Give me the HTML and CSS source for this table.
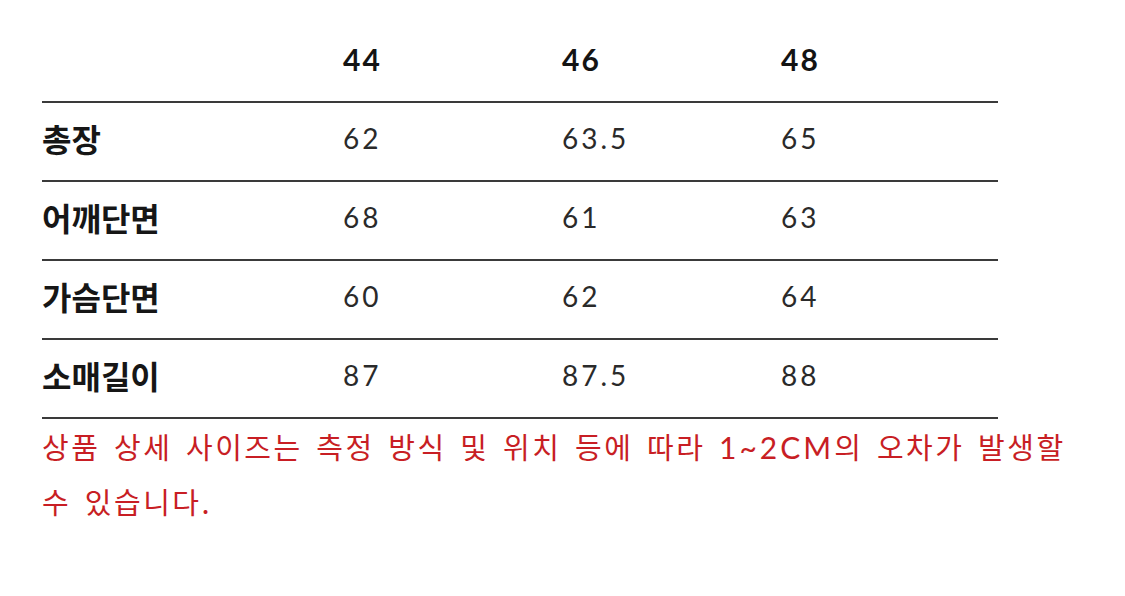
FILE: index.html
```html
<!DOCTYPE html>
<html lang="ko">
<head>
<meta charset="utf-8">
<title>사이즈 표</title>
<link rel="stylesheet" href="styles.css">
</head>
<body>
<div class="sheet">
  <div class="size-table">
    <div class="row head">
      <div class="cell label"></div>
      <div class="cell size">44</div>
      <div class="cell size">46</div>
      <div class="cell size">48</div>
    </div>
    <div class="row">
      <div class="cell label">총장</div>
      <div class="cell num">62</div>
      <div class="cell num">63.5</div>
      <div class="cell num">65</div>
    </div>
    <div class="row">
      <div class="cell label">어깨단면</div>
      <div class="cell num">68</div>
      <div class="cell num">61</div>
      <div class="cell num">63</div>
    </div>
    <div class="row">
      <div class="cell label">가슴단면</div>
      <div class="cell num">60</div>
      <div class="cell num">62</div>
      <div class="cell num">64</div>
    </div>
    <div class="row">
      <div class="cell label">소매길이</div>
      <div class="cell num">87</div>
      <div class="cell num">87.5</div>
      <div class="cell num">88</div>
    </div>
  </div>
  <p class="note">상품 상세 사이즈는 측정 방식 및 위치 등에 따라 <span class="latin">1~2CM</span>의 오차가 발생할 수 있습니다.</p>
</div>
</body>
</html>
```

FILE: styles.css
```css
html, body {
  margin: 0;
  padding: 0;
  background: #ffffff;
}

body {
  font-family: "Noto Sans CJK KR", "Noto Sans", sans-serif;
  color: #1a1a1a;
}

.sheet {
  padding-left: 42px;
  width: 1060px;
}

.size-table {
  width: 956px;
}

.row {
  display: grid;
  grid-template-columns: 301px 219px 219px 1fr;
  align-items: center;
  box-sizing: content-box;
  height: 69px;
  padding-bottom: 8px;
  border-bottom: 2px solid #3a3a3a;
}

.row.head {
  height: 84px;
  padding-top: 17px;
  padding-bottom: 0;
}

.cell.label {
  font-family: "Noto Sans CJK KR", sans-serif;
  font-weight: 700;
  font-size: 32px;
  letter-spacing: 0;
  color: #161616;
}

.cell.size {
  font-family: Lato, "Noto Sans", sans-serif;
  font-weight: 700;
  font-size: 30px;
  letter-spacing: 2px;
  color: #141414;
}

.cell.num {
  font-family: Lato, "Noto Sans", sans-serif;
  font-weight: 400;
  font-size: 28px;
  letter-spacing: 3px;
  color: #2a2a2a;
}

.note {
  margin: 0;
  font-family: "Noto Sans CJK KR", sans-serif;
  font-size: 29px;
  line-height: 54px;
  letter-spacing: 2.5px;
  word-spacing: 3px;
  color: #c81e24;
  width: 1040px;
}

.note .latin {
  font-family: Lato, sans-serif;
  font-weight: 400;
  font-size: 30px;
  letter-spacing: 3px;
}
```
